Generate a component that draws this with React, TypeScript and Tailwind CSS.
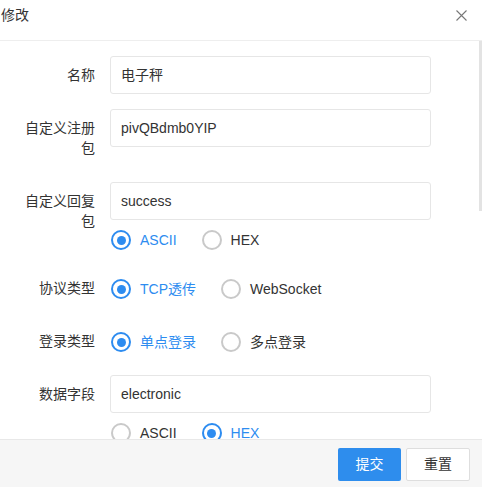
import React from "react";

type Opt = { label: string; checked: boolean };

const Radio = ({ label, checked }: Opt) => (
  <div className="flex items-center h-[28px] mr-[25px]">
    <span
      className={`flex items-center justify-center w-[20px] h-[20px] rounded-full border-2 ${
        checked ? "border-[#2d8cf0]" : "border-[#c9c9c9]"
      }`}
    >
      {checked && <span className="w-[9px] h-[9px] rounded-full bg-[#2d8cf0]" />}
    </span>
    <span className={`ml-[9px] ${checked ? "text-[#2d8cf0]" : "text-[#333]"}`}>{label}</span>
  </div>
);

const RadioGroup = ({ opts }: { opts: Opt[] }) => (
  <div className="flex mt-[6px] pl-[1px]">
    {opts.map((o) => (
      <Radio key={o.label} {...o} />
    ))}
  </div>
);

const Field = ({ label, children }: { label: string; children: React.ReactNode }) => (
  <div className="flex mb-[15px]">
    <label className="w-[110px] shrink-0 px-[15px] py-[9px] leading-5 text-right text-[#333]">
      {label}
    </label>
    <div className="w-[321px] min-h-[38px]">{children}</div>
  </div>
);

const Input = ({ value }: { value: string }) => (
  <div className="h-[38px] flex items-center border border-[#e6e6e6] rounded-[3px] pl-[10px] text-[#333]">
    {value}
  </div>
);

export default function App() {
  return (
    <div
      className="w-[482px] h-[487px] bg-white flex flex-col text-[14px] overflow-hidden"
      style={{ fontFamily: '"Liberation Sans", "Noto Sans CJK SC", sans-serif' }}
    >
      <div className="h-[41px] shrink-0 flex items-start justify-between border-b border-[#eee]">
        <span className="pt-[5px] pl-[1px] leading-5 text-[#333]">修改</span>
        <svg className="mt-[10px] mr-[15px]" width="11" height="11" viewBox="0 0 11 11">
          <path d="M0.5 0.5L10.5 10.5M10.5 0.5L0.5 10.5" stroke="#777" strokeWidth="1.1" fill="none" />
        </svg>
      </div>

      <div className="relative flex-1 overflow-hidden pt-[15px]">
        <div className="absolute right-0 top-0 w-[3px] h-[170px] bg-[#e3e3e3]" />
        <Field label="名称">
          <Input value="电子秤" />
        </Field>
        <Field label="自定义注册包">
          <Input value="pivQBdmb0YIP" />
        </Field>
        <Field label="自定义回复包">
          <Input value="success" />
          <RadioGroup
            opts={[
              { label: "ASCII", checked: true },
              { label: "HEX", checked: false },
            ]}
          />
        </Field>
        <Field label="协议类型">
          <RadioGroup
            opts={[
              { label: "TCP透传", checked: true },
              { label: "WebSocket", checked: false },
            ]}
          />
        </Field>
        <Field label="登录类型">
          <RadioGroup
            opts={[
              { label: "单点登录", checked: true },
              { label: "多点登录", checked: false },
            ]}
          />
        </Field>
        <Field label="数据字段">
          <Input value="electronic" />
          <RadioGroup
            opts={[
              { label: "ASCII", checked: false },
              { label: "HEX", checked: true },
            ]}
          />
        </Field>
      </div>

      <div className="h-[48px] shrink-0 flex justify-end items-start gap-[5px] pt-[8px] pr-[12px] border-t border-[#e8e8e8] bg-[#f6f6f6]">
        <button className="w-[63px] h-[33px] rounded-[2px] bg-[#2e8ded] text-white">提交</button>
        <button className="w-[64px] h-[33px] rounded-[2px] bg-white border border-[#dedede] text-[#333]">
          重置
        </button>
      </div>
    </div>
  );
}
